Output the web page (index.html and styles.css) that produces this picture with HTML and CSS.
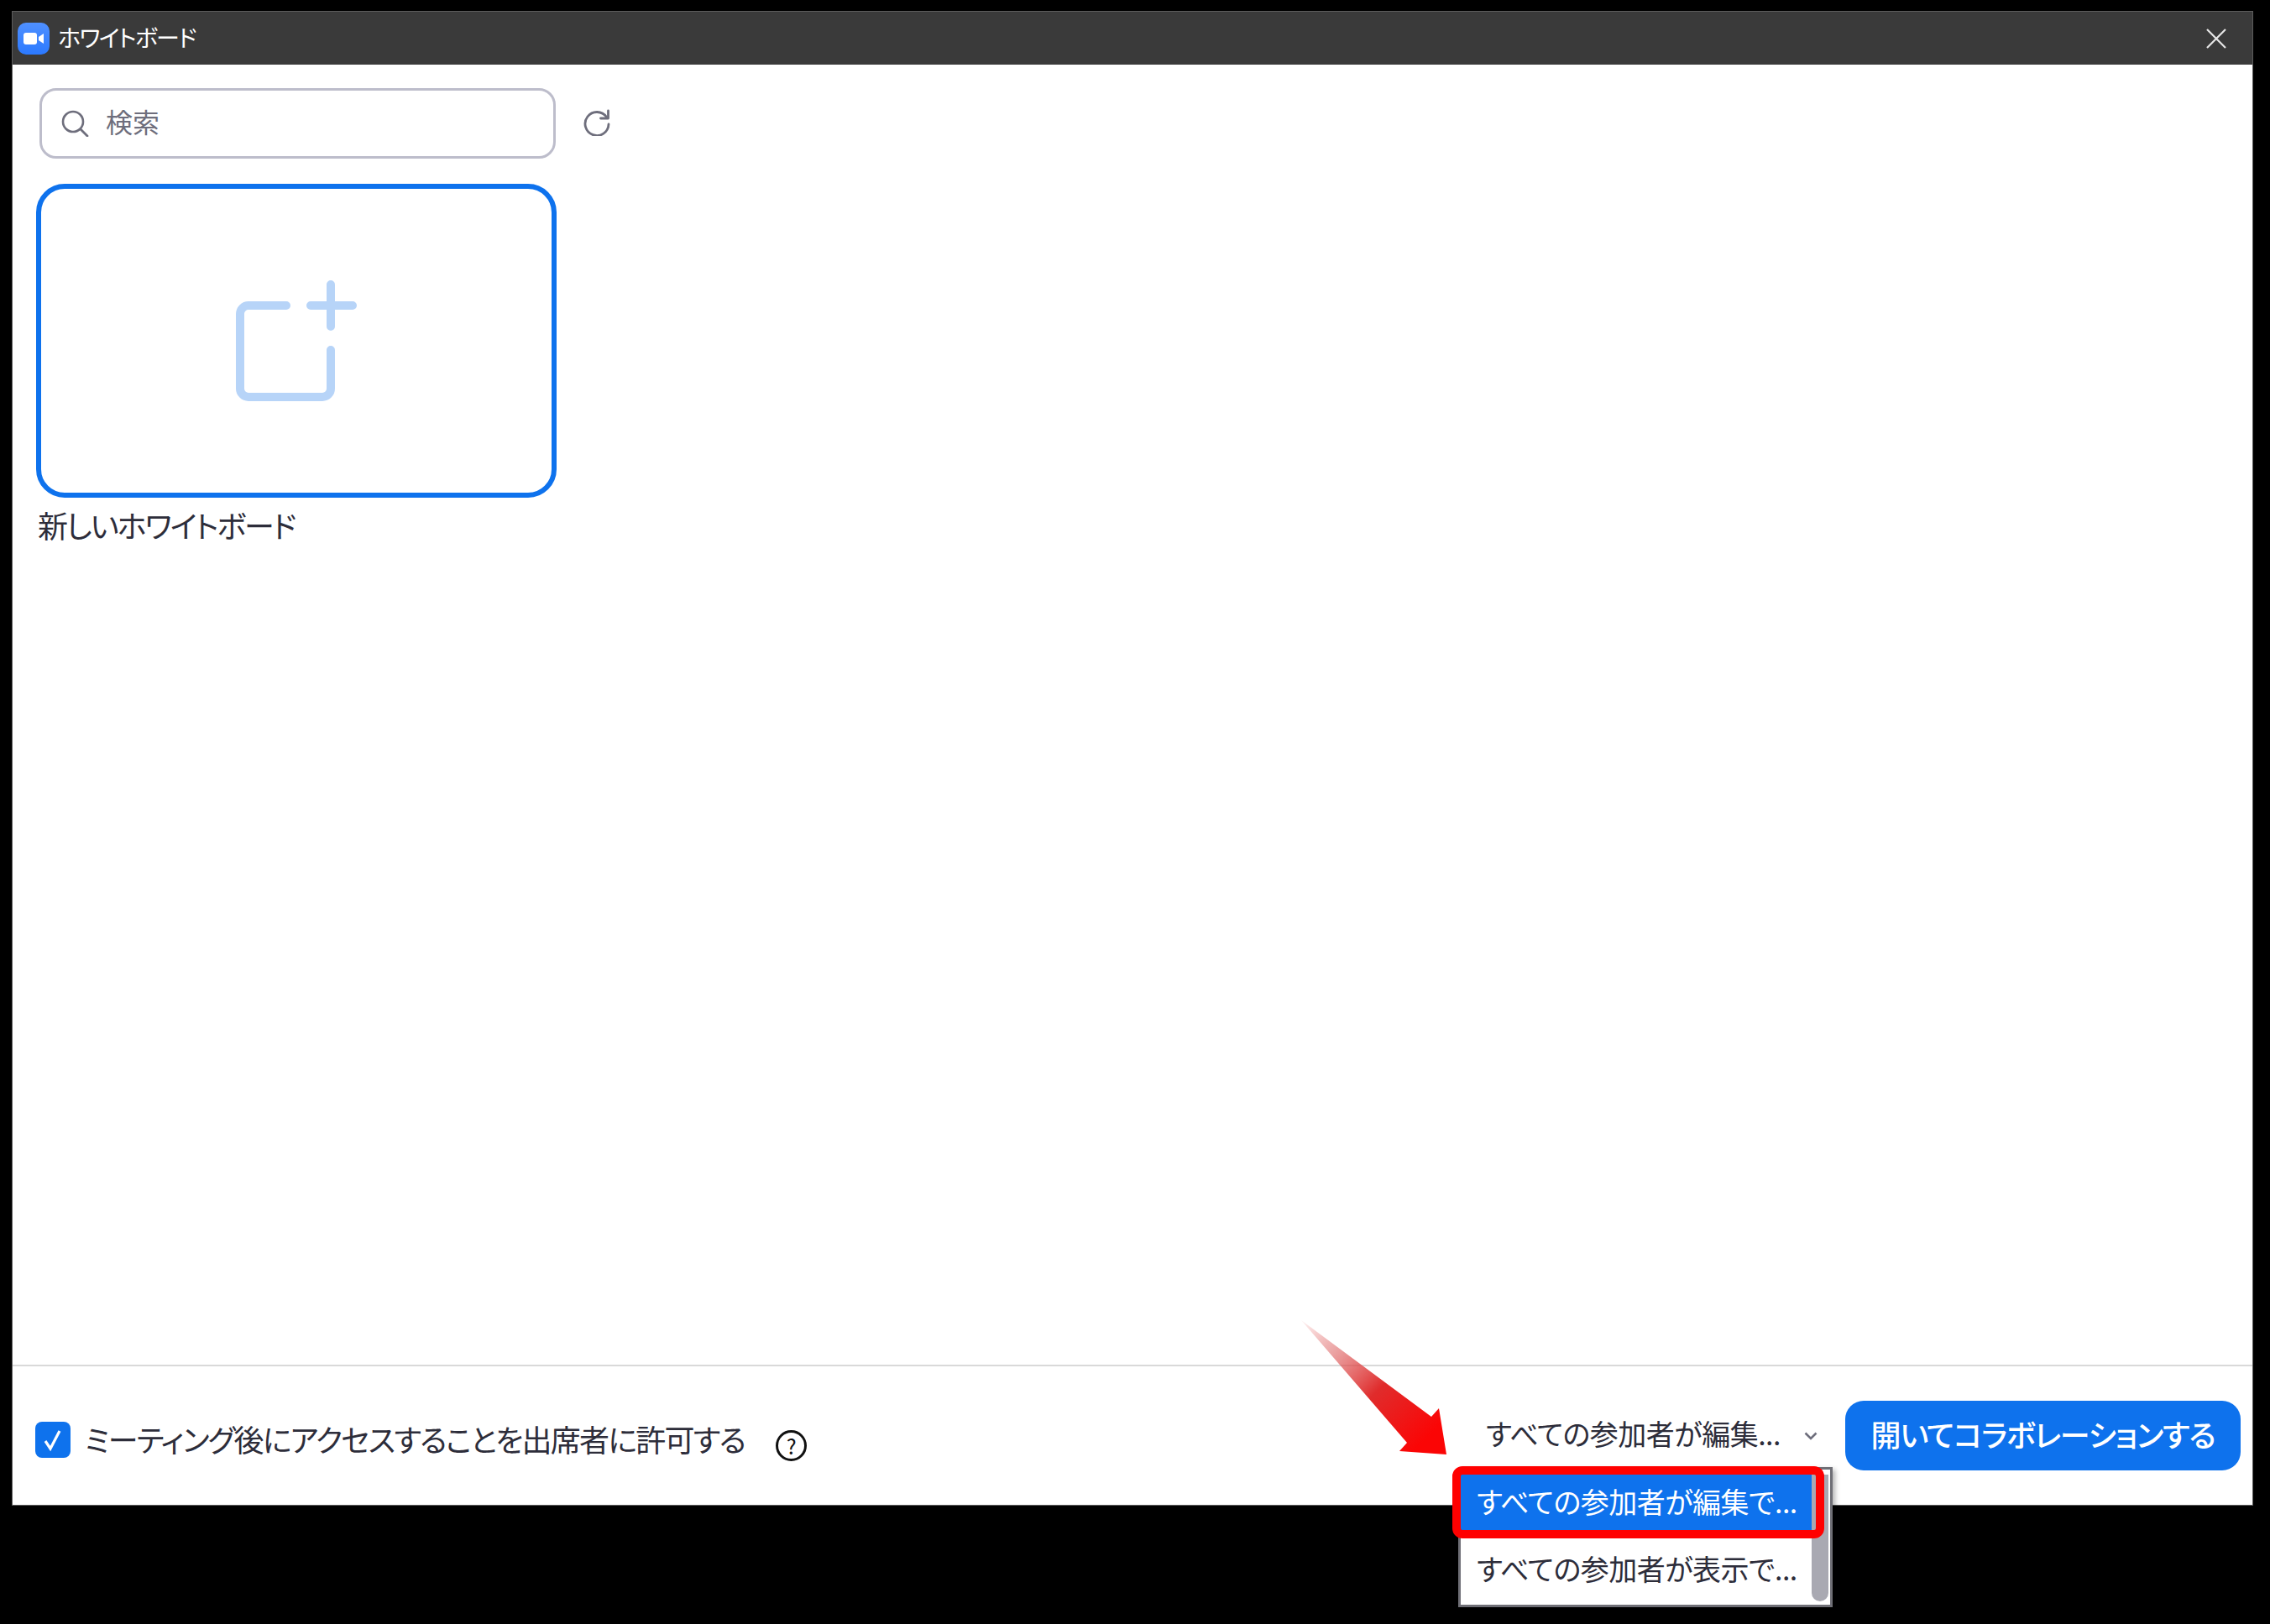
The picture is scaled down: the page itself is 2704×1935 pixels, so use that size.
FILE: index.html
```html
<!DOCTYPE html>
<html lang="ja">
<head>
<meta charset="utf-8">
<title>ホワイトボード</title>
<link rel="stylesheet" href="styles.css">
</head>
<body>
<div class="window">
  <header class="titlebar">
    <svg class="app-icon" viewBox="0 0 38 38">
      <defs><linearGradient id="zg" x1="0" y1="0" x2="0" y2="1"><stop offset="0" stop-color="#4f90ff"/><stop offset="1" stop-color="#2b79ff"/></linearGradient></defs>
      <rect width="38" height="38" rx="10" fill="url(#zg)"/>
      <rect x="7" y="12" width="16" height="14" rx="3" fill="#fff"/>
      <path d="M25 17l6-4v12l-6-4z" fill="#fff"/>
    </svg>
    <span class="title-text">ホワイトボード</span>
    <svg class="close-icon" viewBox="0 0 24 24"><path d="M1 1l22 22M23 1L1 23" stroke="#e6e6e6" stroke-width="2.2" fill="none"/></svg>
  </header>
  <main class="content">
    <div class="search-row">
      <div class="search">
        <svg class="search-icon" viewBox="0 0 33 32"><circle cx="14" cy="14" r="12" stroke="#6e6e7c" stroke-width="2.6" fill="none"/><path d="M23 23l8 8" stroke="#6e6e7c" stroke-width="2.8" fill="none" stroke-linecap="round"/></svg>
        <span class="search-text">検索</span>
      </div>
      <svg class="refresh-icon" viewBox="0 0 32 32"><path d="M27.5 9.5A14 14 0 1 0 30 18" stroke="#6e6e7c" stroke-width="2.8" fill="none" stroke-linecap="round"/><path d="M29.5 2v9h-9" stroke="#6e6e7c" stroke-width="2.8" fill="none" stroke-linecap="round" stroke-linejoin="round"/></svg>
    </div>
    <div class="card">
      <svg class="card-icon" viewBox="0 0 144 144">
        <path d="M60 30H15a10 10 0 0 0-10 10v89a10 10 0 0 0 10 10h88a10 10 0 0 0 10-10V83" stroke="#b7d4f8" stroke-width="10" fill="none" stroke-linecap="round"/>
        <path d="M113 5v50M89 30h50" stroke="#b7d4f8" stroke-width="10" fill="none" stroke-linecap="round"/>
      </svg>
    </div>
    <div class="card-label">新しいホワイトボード</div>
  </main>
  <footer class="footer">
    <div class="allow">
      <span class="checkbox"><svg viewBox="0 0 42 43"><path d="M12 23l6 9 11-21" stroke="#fff" stroke-width="3.2" fill="none"/></svg></span>
      <span class="allow-text">ミーティング後にアクセスすることを出席者に許可する</span>
      <span class="help">?</span>
    </div>
    <div class="footer-right">
      <span class="select-text">すべての参加者が編集...</span>
      <svg class="chevron" viewBox="0 0 16 10"><path d="M1.5 1.5L8 8l6.5-6.5" stroke="#6e6e7c" stroke-width="2.6" fill="none"/></svg>
      <button class="primary">開いてコラボレーションする</button>
    </div>
  </footer>
  <div class="popup">
    <div class="option option-active">すべての参加者が編集で...</div>
    <div class="option">すべての参加者が表示で...</div>
    <div class="scrollbar"></div>
  </div>
  <div class="highlight"></div>
  <svg class="arrow" viewBox="0 0 180 170">
    <defs><linearGradient id="ag" gradientUnits="userSpaceOnUse" x1="5" y1="5" x2="150" y2="150"><stop offset="0" stop-color="#e04040" stop-opacity="0.05"/><stop offset="0.25" stop-color="#dc6060" stop-opacity=".55"/><stop offset="0.6" stop-color="#e02c2c"/><stop offset="1" stop-color="#fb0505"/></linearGradient></defs>
    <path d="M5 5L160 120L169 110L178 165L122 161L131 151Z" fill="url(#ag)"/>
  </svg>
</div>
</body>
</html>
```
FILE: styles.css
```css
* { box-sizing: border-box; }
html, body { margin: 0; height: 100%; }
body {
  background: #000;
  padding: 13px 20px 141px 14px;
  font-family: "Noto Sans CJK JP", "Noto Sans", sans-serif;
  color: #2d2d3a;
  font-feature-settings: "palt";
}
.window {
  position: relative;
  height: 100%;
  display: flex;
  flex-direction: column;
  background: #fff;
  border: 1px solid #5c5c5c;
}
.titlebar {
  height: 63px;
  flex: none;
  background: #3a3a3a;
  display: flex;
  align-items: center;
  padding: 0 31px 0 6px;
}
.app-icon { width: 38px; height: 38px; flex: none; }
.title-text { margin: 0 0 3px 10px; font-size: 28px; color: #fff; letter-spacing: -1.6px; }
.close-icon { width: 24px; height: 24px; margin-left: auto; }
.content { flex: 1; padding: 28px 0 0 28px; }
.search-row { display: flex; align-items: center; padding-left: 4px; }
.search {
  width: 615px;
  height: 84px;
  border: 3px solid #bdbdcb;
  border-radius: 20px;
  display: flex;
  align-items: center;
  padding-left: 23px;
}
.search-icon { width: 33px; height: 32px; }
.search-text { margin: 0 0 7px 20px; font-size: 32px; color: #6e6e7c; }
.refresh-icon { width: 32px; height: 32px; margin: 0 0 3px 33px; }
.card {
  width: 620px;
  height: 374px;
  margin-top: 30px;
  border: 6px solid #0e72ed;
  border-radius: 34px;
  display: flex;
  align-items: center;
  justify-content: center;
}
.card-icon { width: 144px; height: 144px; }
.card-label { margin-top: 6px; padding-left: 2px; font-size: 36px; line-height: 52px; letter-spacing: -1.9px; color: #2d2d3a; }
.footer {
  height: 167px;
  flex: none;
  border-top: 2px solid #d9d9d9;
  display: flex;
  align-items: center;
  padding: 0 14px 0 27px;
}
.allow { display: flex; align-items: center; margin-top: 10px; }
.checkbox { width: 42px; height: 43px; background: #0e72ed; border-radius: 8px; display: block; flex: none; }
.checkbox svg { display: block; width: 42px; height: 43px; }
.allow-text { margin: 0 0 3px 17px; font-size: 36px; letter-spacing: -1.75px; white-space: nowrap; }
.help {
  margin-left: 37px;
  margin-top: 14px;
  width: 37px;
  height: 37px;
  border: 3px solid #111;
  border-radius: 50%;
  font-size: 25px;
  line-height: 30px;
  text-align: center;
  color: #111;
}
.footer-right { margin-left: auto; display: flex; align-items: center; }
.select-text { margin-bottom: 6px; font-size: 34px; letter-spacing: -0.5px; white-space: nowrap; }
.chevron { width: 16px; height: 10px; margin-left: 28px; }
.primary {
  margin-left: 33px;
  width: 471px;
  height: 83px;
  border: 0;
  border-radius: 22px;
  background: #0e72ed;
  color: #fff;
  font: inherit;
  font-feature-settings: "palt";
  font-size: 36px;
  font-weight: 500;
  letter-spacing: -1.2px;
  white-space: nowrap;
  padding: 0 0 5px;
}
.popup {
  position: absolute;
  left: 1722px;
  top: 1734px;
  width: 446px;
  height: 167px;
  background: #fff;
  border: 3px solid #6f6f76;
  padding: 6px 20px 0 0;
  box-shadow: 3px 3px 6px rgba(0,0,0,.3);
}
.option {
  height: 66px;
  line-height: 64px;
  padding-left: 19px;
  font-size: 34px;
  letter-spacing: -0.5px;
  white-space: nowrap;
  margin-bottom: 14px;
}
.option-active { background: #0e72ed; color: #fff; }
.scrollbar {
  position: absolute;
  right: 2px;
  top: 6px;
  bottom: 4px;
  width: 20px;
  background: #a9a9b2;
  border-radius: 0 0 10px 10px;
}
.highlight {
  position: absolute;
  left: 1715px;
  top: 1733px;
  width: 443px;
  height: 86px;
  border: 10px solid #f00;
  border-radius: 12px;
}
.arrow {
  position: absolute;
  left: 1530px;
  top: 1554px;
  width: 180px;
  height: 170px;
}
```
